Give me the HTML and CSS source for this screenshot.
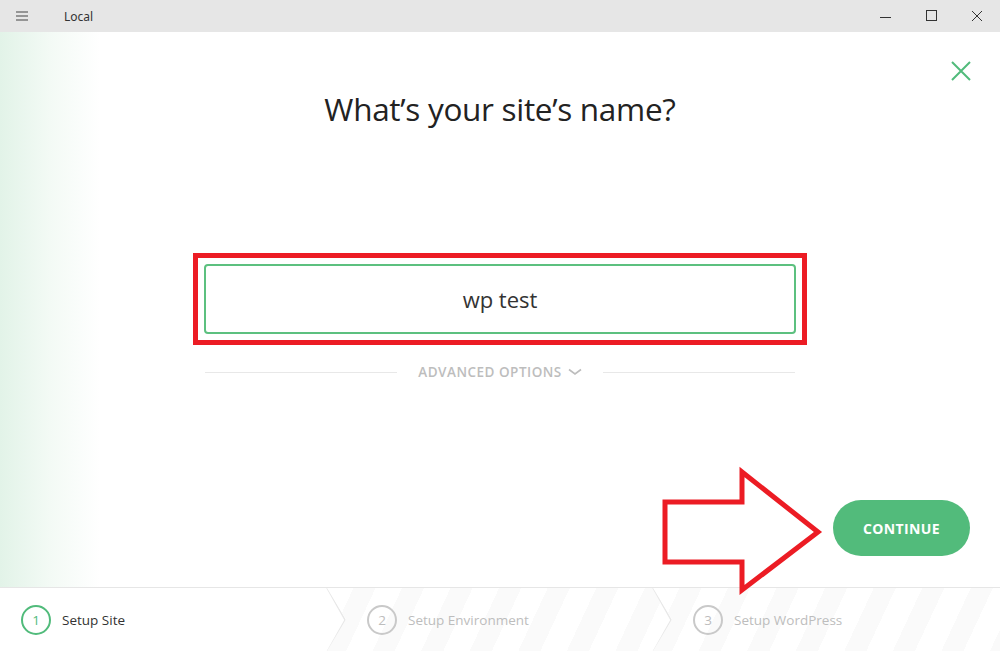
FILE: index.html
```html
<!DOCTYPE html>
<html lang="en">
<head>
  <meta charset="UTF-8">
  <title>Local</title>
  <link rel="stylesheet" href="styles.css">
</head>
<body>
  <div class="app">
    <div class="titlebar">
      <div class="titlebar-left">
        <svg class="menu-icon" width="14" height="12" viewBox="0 0 14 12">
          <path d="M1 2h12M1 6h12M1 10h12" stroke="#444" stroke-width="1.2"/>
        </svg>
        <span class="app-name">Local</span>
      </div>
      <div class="win-controls">
        <svg width="46" height="32" viewBox="0 0 46 32"><path d="M18 17.5h11" stroke="#333" stroke-width="1"/></svg>
        <svg width="46" height="32" viewBox="0 0 46 32"><rect x="18.5" y="10.5" width="10" height="10" fill="none" stroke="#333" stroke-width="1"/></svg>
        <svg width="46" height="32" viewBox="0 0 46 32"><path d="M18 11l10 10M28 11l-10 10" stroke="#333" stroke-width="1"/></svg>
      </div>
    </div>

    <div class="main">
      <div class="main-top">
        <svg class="close-icon" width="20" height="20" viewBox="0 0 20 20">
          <path d="M1 1l18 18M19 1L1 19" stroke="#51bb7b" stroke-width="2"/>
        </svg>
      </div>

      <h1 class="title">What’s your site’s name?</h1>

      <div class="highlight">
        <input type="text" class="site-name" value="wp test">
      </div>

      <div class="advanced">
        <span class="rule"></span>
        <span class="advanced-label">ADVANCED OPTIONS
          <svg width="14" height="8" viewBox="0 0 14 8"><path d="M1 1.5l6 4.5 6-4.5" fill="none" stroke="#bdbdbd" stroke-width="1.6"/></svg>
        </span>
        <span class="rule"></span>
      </div>

      <div class="actions">
        <button class="continue-btn">CONTINUE</button>
      </div>
    </div>

    <div class="steps">
      <div class="step step-active">
        <span class="step-num">1</span>
        <span class="step-label">Setup Site</span>
        <svg class="step-edge" width="20" height="64" viewBox="0 0 20 64"><path d="M1 0l18 32L1 64" fill="none" stroke="#e8e8e8" stroke-width="1.5"/></svg>
      </div>
      <div class="step">
        <span class="step-num">2</span>
        <span class="step-label">Setup Environment</span>
        <svg class="step-edge" width="20" height="64" viewBox="0 0 20 64"><path d="M1 0l18 32L1 64" fill="none" stroke="#e8e8e8" stroke-width="1.5"/></svg>
      </div>
      <div class="step step-last">
        <span class="step-num">3</span>
        <span class="step-label">Setup WordPress</span>
      </div>
    </div>

    <!-- annotation arrow drawn over the page -->
    <svg class="callout-arrow" width="170" height="132" viewBox="0 0 170 132">
      <path d="M7 37h77V7l76 60-76 58V97H7z" fill="none" stroke="#ec1c24" stroke-width="5" stroke-linejoin="miter"/>
    </svg>
  </div>
</body>
</html>
```

FILE: styles.css
```css
* {
  box-sizing: border-box;
  margin: 0;
  padding: 0;
}

body {
  font-family: 'Open Sans', 'Liberation Sans', sans-serif;
  background: #fff;
  width: 1000px;
  height: 651px;
  overflow: hidden;
}

.app {
  position: relative;
  width: 1000px;
  height: 651px;
  display: flex;
  flex-direction: column;
}

.titlebar {
  height: 32px;
  background: #e6e6e6;
  display: flex;
  justify-content: space-between;
  align-items: center;
}

.titlebar-left {
  display: flex;
  align-items: center;
}

.menu-icon {
  margin-left: 15px;
}

.app-name {
  margin-left: 35px;
  font-size: 12px;
  color: #333;
  font-family: 'Noto Sans', sans-serif;
}

.win-controls {
  display: flex;
  height: 32px;
}

.win-controls svg {
  display: block;
}

.main {
  height: 555px;
  background: linear-gradient(to right, #e2f3e8 0, #f3faf5 50px, #fff 100px);
  display: flex;
  flex-direction: column;
  align-items: center;
}

.main-top {
  align-self: stretch;
  display: flex;
  justify-content: flex-end;
  padding: 29px 29px 0 0;
}

.close-icon {
  display: block;
}

.title {
  margin-top: 8px;
  font-size: 31.5px;
  font-weight: 400;
  color: #222;
  line-height: 40px;
  letter-spacing: -0.3px;
}

.highlight {
  margin-top: 124px;
  border: 5px solid #ec1c24;
  padding: 6px;
  width: 614px;
}

.site-name {
  display: block;
  width: 100%;
  height: 70px;
  border: 2px solid #5cc07f;
  border-radius: 4px;
  text-align: center;
  font-family: 'Open Sans', sans-serif;
  font-size: 22px;
  color: #333;
  outline: none;
}

.advanced {
  width: 590px;
  margin-top: 18px;
  display: flex;
  align-items: center;
  gap: 21px;
}

.rule {
  flex: 1;
  height: 1px;
  background: #e8e8e8;
}

.advanced-label {
  font-size: 13.5px;
  font-weight: 600;
  color: #bdbdbd;
  letter-spacing: 0.5px;
  display: flex;
  align-items: center;
  gap: 6px;
}

.actions {
  align-self: stretch;
  display: flex;
  justify-content: flex-end;
  padding-right: 30px;
  margin-top: 119px;
}

.continue-btn {
  width: 137px;
  height: 56px;
  border: none;
  border-radius: 28px;
  background: #52bb7b;
  color: #fff;
  font-family: 'Open Sans', sans-serif;
  font-size: 14px;
  font-weight: 700;
  letter-spacing: 0.4px;
  cursor: pointer;
}

.steps {
  flex: 1;
  display: flex;
  border-top: 1px solid #e6e6e6;
}

.step {
  position: relative;
  flex: 0 0 345px;
  margin-right: -19px;
  display: flex;
  align-items: center;
  padding-left: 40px;
  background: repeating-linear-gradient(115deg, #fff 0, #fff 24px, #fafafa 24px, #fafafa 44px);
  clip-path: polygon(0 0, calc(100% - 19px) 0, 100% 50%, calc(100% - 19px) 100%, 0 100%);
}

.step-active {
  background: #fff;
  padding-left: 21px;
  z-index: 3;
  flex-basis: 346px;
}

.step:nth-child(2) {
  z-index: 2;
}

.step-last {
  flex: 1;
  margin-right: 0;
  clip-path: none;
}

.step-edge {
  position: absolute;
  right: 0;
  top: 0;
}

.step-num {
  width: 30px;
  height: 30px;
  border: 2px solid #c9c9c9;
  border-radius: 50%;
  display: flex;
  align-items: center;
  justify-content: center;
  font-size: 13.5px;
  color: #bdbdbd;
}

.step-label {
  margin-left: 11px;
  font-size: 13.5px;
  color: #bdbdbd;
}

.step-active .step-num {
  border-color: #51bb7b;
  color: #51bb7b;
}

.step-active .step-label {
  color: #333;
}

.callout-arrow {
  position: absolute;
  left: 658px;
  top: 465px;
}
```
